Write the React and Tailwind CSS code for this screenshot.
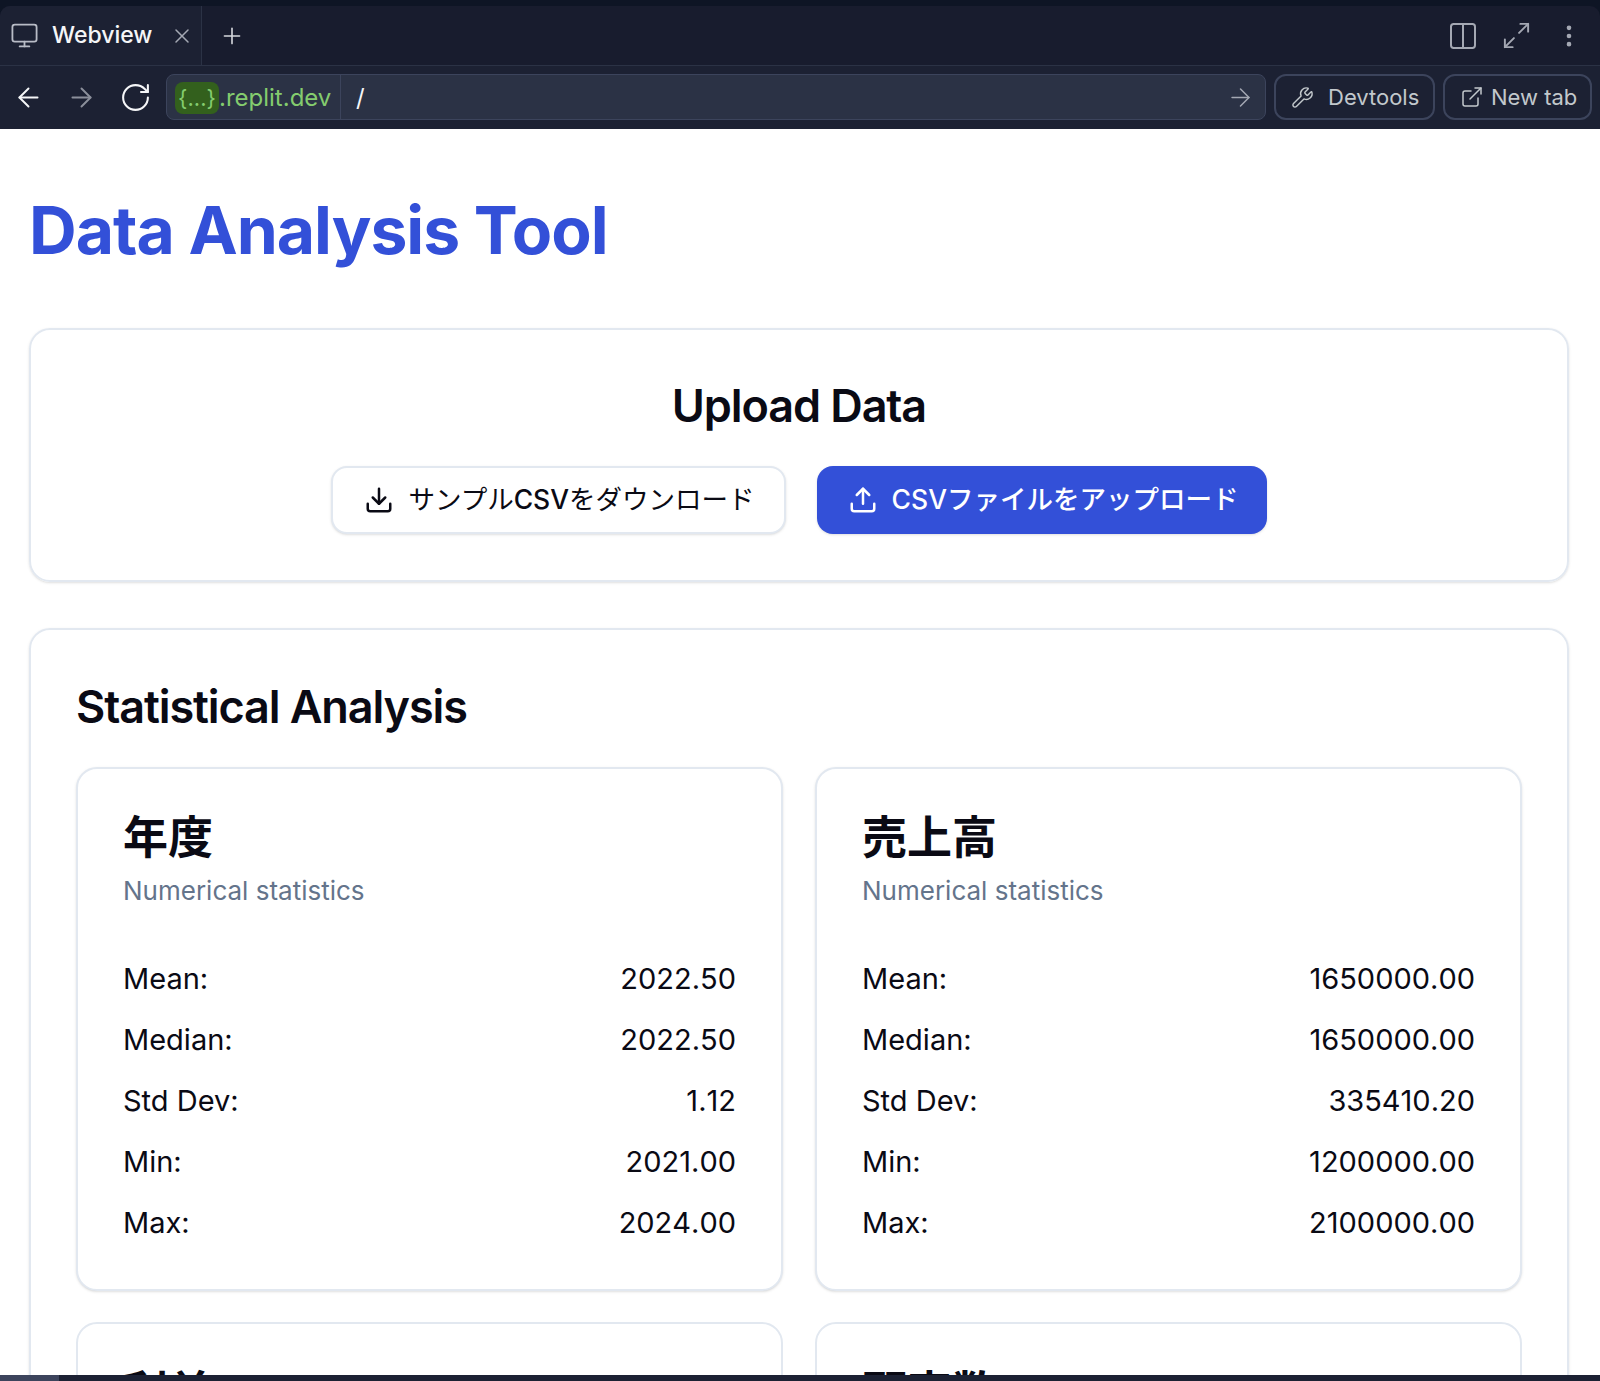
import { Monitor, X, Plus, ArrowLeft, ArrowRight, RotateCw, Columns2, Maximize2, EllipsisVertical, Wrench, ExternalLink, Download, Upload } from "lucide-react";

const FONT = "font-['Inter','Noto_Sans_CJK_JP',sans-serif]";

const columns = [
  {
    name: "年度",
    stats: [
      ["Mean:", "2022.50"],
      ["Median:", "2022.50"],
      ["Std Dev:", "1.12"],
      ["Min:", "2021.00"],
      ["Max:", "2024.00"],
    ],
  },
  {
    name: "売上高",
    stats: [
      ["Mean:", "1650000.00"],
      ["Median:", "1650000.00"],
      ["Std Dev:", "335410.20"],
      ["Min:", "1200000.00"],
      ["Max:", "2100000.00"],
    ],
  },
];

function StatCard({ name, stats }) {
  return (
    <div className="rounded-[21px] border-2 border-[#e2e8f0] bg-white px-[45px] pt-[41px] pb-[36px] shadow-sm">
      <h3 className="text-[45px] leading-[56px] font-semibold text-[#0a0a14]">{name}</h3>
      <p className="mt-[6px] text-[26px] leading-[38px] text-[#64748b]">Numerical statistics</p>
      <div className="mt-[38px]">
        {stats.map(([label, value]) => (
          <div key={label} className="flex h-[61px] items-center justify-between text-[29px] text-[#0a0a14]">
            <span>{label}</span>
            <span className="[font-kerning:none]">{value}</span>
          </div>
        ))}
      </div>
    </div>
  );
}

export default function App() {
  return (
    <div className={`flex h-screen flex-col overflow-hidden bg-white ${FONT}`}>
      <div className="shrink-0 bg-[#0e1525] pt-[6px]">
        <div className="flex h-[60px] items-center overflow-hidden rounded-t-[10px] border-b border-[#2b3245] bg-[#181c2e] text-white">
          <div className="flex h-full w-[202px] items-center border-r border-[#2b3245] bg-[#1c2133] pl-[10px]">
            <Monitor className="h-[29px] w-[29px] text-[#b8bcc6]" strokeWidth={1.5} />
            <span className="ml-[13px] text-[23px] font-medium text-[#f5f6f8]">Webview</span>
            <X className="ml-[18px] h-[24px] w-[24px] text-[#a4a8b3]" strokeWidth={1.5} />
          </div>
          <Plus className="ml-[17px] h-[26px] w-[26px] text-[#d5d7dd]" strokeWidth={1.5} />
          <div className="ml-auto flex items-center pr-[17px]">
            <Columns2 className="h-[32px] w-[32px] text-[#a4a8b3]" strokeWidth={1.5} />
            <Maximize2 className="ml-[22px] h-[31px] w-[31px] text-[#a4a8b3]" strokeWidth={1.5} />
            <EllipsisVertical className="ml-[23px] h-[28px] w-[28px] text-[#a4a8b3]" strokeWidth={2} />
          </div>
        </div>
      </div>
      <div className="flex h-[63px] shrink-0 items-center gap-[8px] bg-[#1c2133] pr-[8px] pb-[1px]">
        <div className="flex w-[158px] shrink-0 items-center pl-[13px]">
          <ArrowLeft className="h-[31px] w-[31px] text-[#f5f6f8]" strokeWidth={1.5} />
          <ArrowRight className="ml-[22px] h-[31px] w-[31px] text-[#8b8f9b]" strokeWidth={1.5} />
          <RotateCw className="ml-[22px] h-[33px] w-[33px] text-[#f5f6f8]" strokeWidth={1.5} />
        </div>
        <div className="flex h-[46px] flex-1 items-center rounded-[8px] border border-[#3c445c] bg-[#2b3245]">
          <div className="flex h-full w-[174px] items-center border-r border-[#3c445c] pt-[1px] pl-[8px] text-[24px] text-[#84cc6e]">
            <span className="w-[44px] rounded-[8px] bg-[#33601d] text-center text-[22px] leading-[32px]">{"{...}"}</span>
            <span>.replit.dev</span>
          </div>
          <span className="ml-[15px] pt-[1px] text-[24px] text-[#f5f6f8]">/</span>
          <ArrowRight className="mr-[10px] ml-auto h-[29px] w-[29px] text-[#a4a8b3]" strokeWidth={1.25} />
        </div>
        <div className="flex h-[46px] w-[161px] items-center rounded-[12px] border-2 border-[#3c445c] pl-[15px] text-[22px] whitespace-nowrap text-[#c2c8cc]">
          <Wrench className="h-[23px] w-[23px]" strokeWidth={1.5} />
          <span className="ml-[14px]">Devtools</span>
        </div>
        <div className="flex h-[46px] w-[149px] items-center rounded-[12px] border-2 border-[#3c445c] pl-[15px] text-[22px] whitespace-nowrap text-[#c2c8cc]">
          <ExternalLink className="h-[24px] w-[24px]" strokeWidth={1.5} />
          <span className="ml-[7px]">New tab</span>
        </div>
      </div>

      <main className="min-h-0 flex-1 overflow-hidden px-[29px] pr-[31px]">
        <h1 className="mt-[57px] text-[66px] leading-[88px] font-bold tracking-[-1px] text-[#3350d8]">Data Analysis Tool</h1>
        <section className="mt-[54px] flex h-[254px] flex-col items-center rounded-[21px] border-2 border-[#e2e8f0] pt-[48px] shadow-sm">
          <h2 className="text-[45px] leading-[56px] font-semibold tracking-[-1.1px] text-[#0a0a14]">Upload Data</h2>
          <div className="mt-[32px] flex gap-[31px]">
            <button className="flex h-[68px] w-[455px] items-center justify-center gap-[14px] rounded-[16px] border-2 border-[#e2e8f0] bg-white pl-[2px] text-[26.5px] text-[#0a0a14] shadow-sm">
              <Download className="h-[30px] w-[30px]" strokeWidth={2} />
              <span>サンプル<span className="font-medium">CSV</span>をダウンロード</span>
            </button>
            <button className="flex h-[68px] w-[450px] items-center justify-center gap-[14px] rounded-[16px] bg-[#3350d8] pl-[2px] text-[26.5px] font-medium text-white shadow-sm">
              <Upload className="h-[30px] w-[30px]" strokeWidth={2} />
              CSVファイルをアップロード
            </button>
          </div>
        </section>
        <section className="mt-[46px] rounded-[21px] border-2 border-[#e2e8f0] px-[45px] pt-[45px] shadow-sm">
          <h2 className="text-[45px] leading-[64px] font-semibold tracking-[-1.1px] text-[#0a0a14]">Statistical Analysis</h2>
          <div className="mt-[28px] grid grid-cols-2 gap-x-[32px] gap-y-[31px]">
            {columns.map((c) => (
              <StatCard key={c.name} {...c} />
            ))}
            <div className="rounded-[21px] border-2 border-[#e2e8f0] px-[45px] pt-[41px]">
              <h3 className="text-[45px] leading-[56px] font-semibold text-[#0a0a14]">利益</h3>
            </div>
            <div className="rounded-[21px] border-2 border-[#e2e8f0] px-[45px] pt-[41px]">
              <h3 className="text-[45px] leading-[56px] font-semibold text-[#0a0a14]">顧客数</h3>
            </div>
          </div>
        </section>
      </main>
      <div className="flex h-[6px] shrink-0 bg-[#1c2133]">
        <div className="w-[59px] bg-[#3c445c]" />
      </div>
    </div>
  );
}
